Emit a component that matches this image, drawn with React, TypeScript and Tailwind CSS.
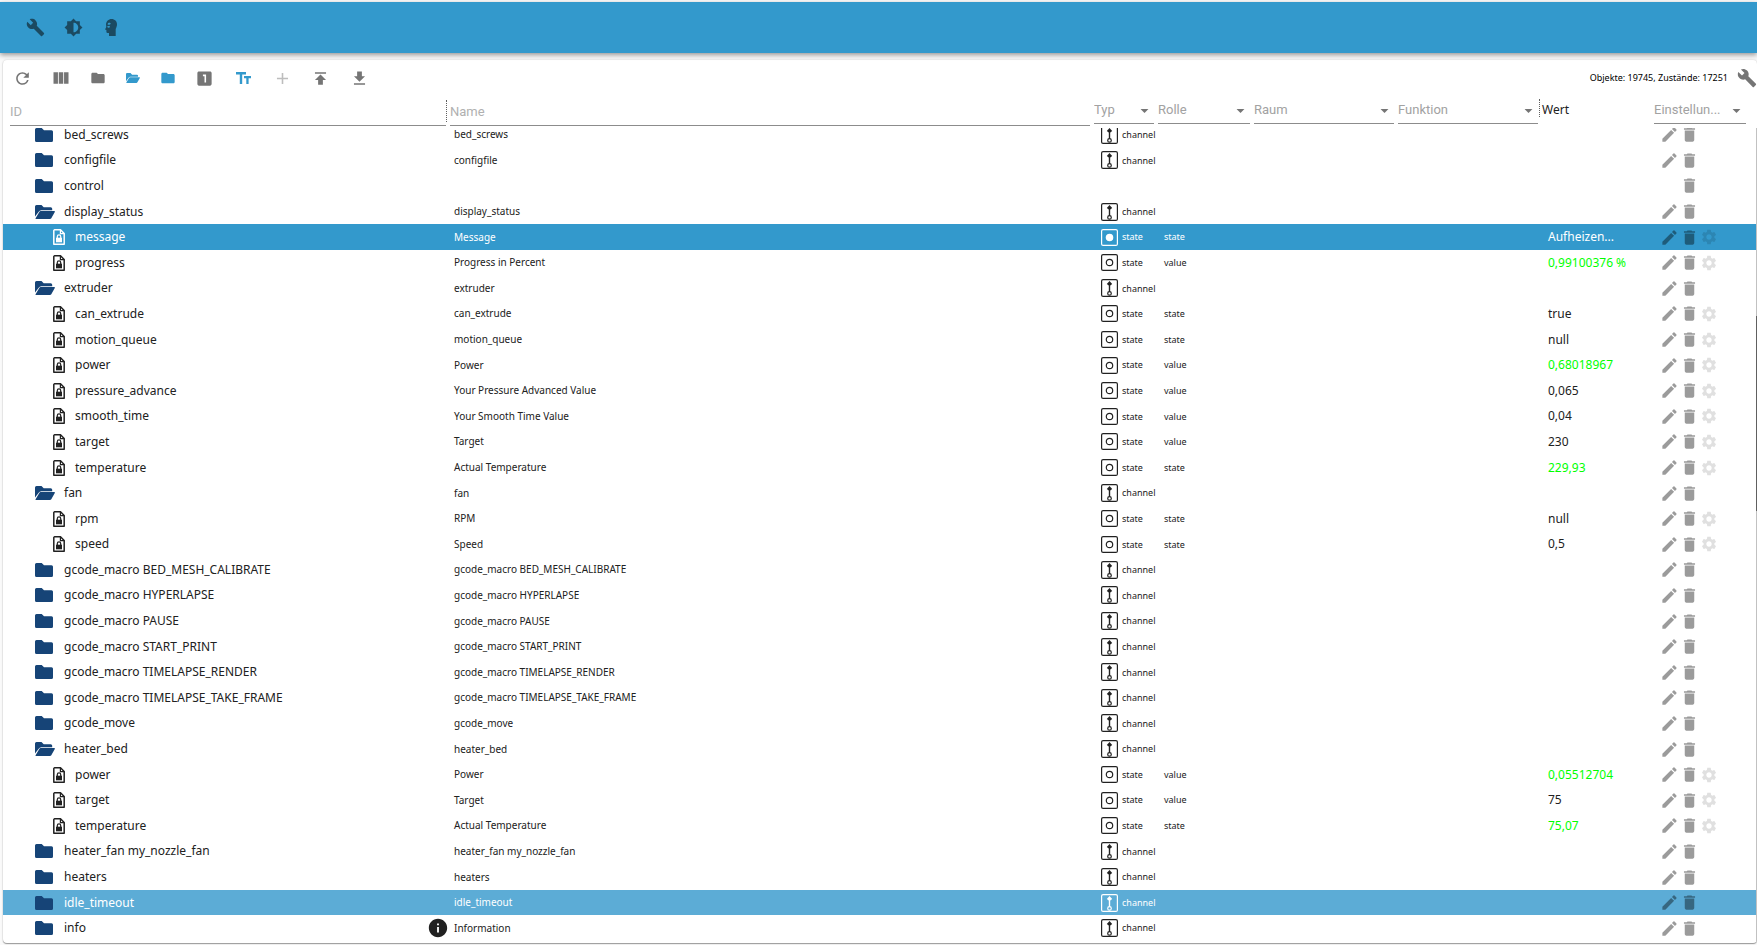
import type { ReactNode } from "react";
import { clsx } from "clsx";
import {
  MdAdd,
  MdArrowDropDown,
  MdBrightness6,
  MdBuild,
  MdCreate,
  MdDelete,
  MdFolder,
  MdGetApp,
  MdInfo,
  MdLooksOne,
  MdPublish,
  MdRefresh,
  MdSettings,
  MdViewColumn,
} from "react-icons/md";

type Kind = "channel" | "state" | "folder";

interface Item {
  id: string;
  name?: string;
  kind: Kind;
  open?: boolean;
  role?: string;
  value?: string;
  changed?: boolean;
  info?: boolean;
}

const channel = (id: string, extra: Partial<Item> = {}): Item => ({ id, name: id, kind: "channel", ...extra });
const state = (id: string, name: string, role: string, value: string, changed = false): Item => ({
  id,
  name,
  kind: "state",
  role,
  value,
  changed,
});

const ITEMS: Item[] = [
  channel("bed_screws"),
  channel("configfile"),
  { id: "control", kind: "folder" },
  channel("display_status", { open: true }),
  state("message", "Message", "state", "Aufheizen..."),
  state("progress", "Progress in Percent", "value", "0,99100376 %", true),
  channel("extruder", { open: true }),
  state("can_extrude", "can_extrude", "state", "true"),
  state("motion_queue", "motion_queue", "state", "null"),
  state("power", "Power", "value", "0,68018967", true),
  state("pressure_advance", "Your Pressure Advanced Value", "value", "0,065"),
  state("smooth_time", "Your Smooth Time Value", "value", "0,04"),
  state("target", "Target", "value", "230"),
  state("temperature", "Actual Temperature", "state", "229,93", true),
  channel("fan", { open: true }),
  state("rpm", "RPM", "state", "null"),
  state("speed", "Speed", "state", "0,5"),
  channel("gcode_macro BED_MESH_CALIBRATE"),
  channel("gcode_macro HYPERLAPSE"),
  channel("gcode_macro PAUSE"),
  channel("gcode_macro START_PRINT"),
  channel("gcode_macro TIMELAPSE_RENDER"),
  channel("gcode_macro TIMELAPSE_TAKE_FRAME"),
  channel("gcode_move"),
  channel("heater_bed", { open: true }),
  state("power", "Power", "value", "0,05512704", true),
  state("target", "Target", "value", "75"),
  state("temperature", "Actual Temperature", "state", "75,07", true),
  channel("heater_fan my_nozzle_fan"),
  channel("heaters"),
  channel("idle_timeout"),
  channel("info", { name: "Information", info: true }),
];

const SELECTED = "message";
const HOVERED = "idle_timeout";

const COLUMNS = "grid grid-cols-[447px_minmax(0,1fr)_64px_96px_144px_144px_112px_103px]";

export default function App() {
  return (
    <div className="flex h-screen flex-col overflow-hidden bg-[#fafafa] pt-[2px] font-['Noto_Sans',sans-serif] text-[#212121]">
      <AppBar />
      <main className="mt-[7px] mb-[2px] ml-[3px] flex min-h-0 flex-1 flex-col rounded-sm bg-white shadow-[0_1px_1px_#999,0_0_2px_#ccc]">
        <Toolbar />
        <ObjectTable />
      </main>
    </div>
  );
}

function AppBar() {
  return (
    <header className="z-10 flex h-[51px] shrink-0 items-center bg-[#3399cc] pl-4 text-[#1b4a61] shadow-[0_2px_5px_rgba(0,0,0,0.4)]">
      <IconButton label="Einstellungen" size="medium">
        <MdBuild size={19} />
      </IconButton>
      <IconButton label="Farbschema" size="medium">
        <MdBrightness6 size={19} />
      </IconButton>
      <IconButton label="Expertenmodus" size="medium">
        <ExpertIcon />
      </IconButton>
    </header>
  );
}

function Toolbar() {
  return (
    <div className="flex h-9 shrink-0 items-center text-[#757575]">
      <IconButton label="Aktualisieren">
        <MdRefresh size={19} />
      </IconButton>
      <IconButton label="Spalten" size="medium">
        <MdViewColumn size={20} />
      </IconButton>
      <IconButton label="Alle zuklappen" size="small">
        <MdFolder size={16} />
      </IconButton>
      <IconButton label="Alle aufklappen" size="small">
        <OpenFolderIcon className="h-[10px] w-[14px] text-[#3399cc]" />
      </IconButton>
      <IconButton label="Eine Ebene zuklappen" size="small">
        <MdFolder size={16} color="#3399cc" />
      </IconButton>
      <IconButton label="Eine Ebene aufklappen">
        <MdLooksOne size={19} />
      </IconButton>
      <IconButton label="Beschreibungen">
        <TextSizeIcon />
      </IconButton>
      <IconButton label="Neues Objekt" disabled size="medium">
        <MdAdd size={19} />
      </IconButton>
      <IconButton label="Hochladen">
        <MdPublish size={19} />
      </IconButton>
      <IconButton label="Herunterladen">
        <MdGetApp size={19} />
      </IconButton>
      <div className="ml-auto flex items-center">
        <span className="text-[9px] text-black">Objekte: 19745, Zustände: 17251</span>
        <button type="button" aria-label="Spalten anpassen" className="ml-[9px]">
          <MdBuild size={20} />
        </button>
      </div>
    </div>
  );
}

interface IconButtonProps {
  label: string;
  size?: "small" | "medium" | "large";
  disabled?: boolean;
  children: ReactNode;
}

const WIDTHS = { small: "w-[35px]", medium: "w-[38px]", large: "w-[39px]" };

function IconButton({ label, size = "large", disabled, children }: IconButtonProps) {
  return (
    <button
      type="button"
      aria-label={label}
      disabled={disabled}
      className={clsx("flex h-9 items-center justify-center disabled:text-[#bdbdbd]", WIDTHS[size])}
    >
      {children}
    </button>
  );
}

function ObjectTable() {
  return (
    <div className="relative flex min-h-0 flex-1 flex-col">
      <table className="flex min-h-0 flex-1 flex-col">
        <thead className="relative z-10 block shrink-0 bg-white">
          <tr className={clsx(COLUMNS, "h-8 text-left font-['Roboto',sans-serif] text-[13px]")}>
            <th className="flex pr-[3px] pl-[7px] font-normal">
              <TextFilter label="ID" />
              <Divider />
            </th>
            <th className="pr-1 font-normal">
              <TextFilter label="Name" />
            </th>
            <SelectFilter label="Typ" />
            <SelectFilter label="Rolle" />
            <SelectFilter label="Raum" />
            <SelectFilter label="Funktion" divider />
            <th className="font-['Noto_Sans',sans-serif] text-[12px] leading-[28px] font-normal">Wert</th>
            <SelectFilter label="Einstellun..." last />
          </tr>
        </thead>
        <tbody className="-mt-[6px] mb-[2px] grid min-h-0 flex-1 auto-rows-fr border-r border-[#c1c1c1]">
          {ITEMS.map((item, i) => (
            <Row key={i} item={item} />
          ))}
        </tbody>
      </table>
      <div className="absolute top-[26%] right-0 h-[23%] w-px bg-[#606060]" />
    </div>
  );
}

function Divider() {
  return <span className="mt-1 h-[22px] shrink-0 border-l border-dotted border-[#606060]" />;
}

function TextFilter({ label }: { label: string }) {
  return (
    <input
      aria-label={label}
      placeholder={label}
      className="h-[30px] w-full min-w-0 border-b border-[#8c8c8c] pt-[2px] outline-none placeholder:text-[#b0b0b0]"
    />
  );
}

function SelectFilter({ label, last, divider }: { label: string; last?: boolean; divider?: boolean }) {
  return (
    <th className={clsx("flex font-normal", last ? "pr-[11px]" : divider ? "pr-[2px]" : "pr-1")}>
      <div className="relative flex-1">
        <select
          aria-label={label}
          className="h-7 w-full appearance-none border-b border-[#8c8c8c] pt-px text-[#a2a2a2] outline-none"
        >
          <option>{label}</option>
        </select>
        <MdArrowDropDown size={19} className="pointer-events-none absolute top-[5px] right-0 text-[#757575]" />
      </div>
      {divider && <span className="mt-[3px] ml-px h-[18px] border-l border-dotted border-[#606060]" />}
    </th>
  );
}

function Row({ item }: { item: Item }) {
  const selected = item.id === SELECTED;
  const hovered = item.id === HOVERED;
  const isState = item.kind === "state";
  return (
    <tr
      className={clsx(
        COLUMNS,
        "min-h-0 items-center text-[10px]",
        selected && "bg-[#3399cc] text-white",
        hovered && "bg-[#5cacd6] text-white",
      )}
    >
      <td className="flex items-center text-[12px]">
        {isState ? (
          <span className="flex w-[72px] pl-[50px]">
            <StateFileIcon />
          </span>
        ) : (
          <span className="flex w-[61px] pl-8 text-[#164477]">
            {item.open ? <OpenFolderIcon className="h-[14px] w-5" /> : <ClosedFolderIcon />}
          </span>
        )}
        {item.id}
        {item.info && <MdInfo size={22} className="mr-px ml-auto" />}
      </td>
      <td className="pl-1">{item.name}</td>
      <td className="flex items-center gap-1 pl-2 text-[9px]">
        {item.kind !== "folder" && (
          <>
            {isState ? <StateIcon filled={selected} /> : <ChannelIcon />}
            {item.kind}
          </>
        )}
      </td>
      <td className="pl-[7px] text-[9px]">{item.role}</td>
      <td />
      <td />
      <td className={clsx("pl-[7px] text-[12px]", item.changed && "text-[#00ff00]")}>{item.value}</td>
      <td
        className={clsx(
          "grid grid-cols-[20px_20px_19px] items-center pl-[7px]",
          selected || hovered ? "text-black/40" : "text-[#9b9b9b]",
        )}
      >
        {item.kind === "folder" ? (
          <span />
        ) : (
          <button type="button" aria-label={`${item.id} bearbeiten`}>
            <MdCreate size={19} />
          </button>
        )}
        <button type="button" aria-label={`${item.id} löschen`}>
          <MdDelete size={19} />
        </button>
        {isState && (
          <button type="button" aria-label={`${item.id} konfigurieren`} className="opacity-30">
            <MdSettings size={18} />
          </button>
        )}
      </td>
    </tr>
  );
}

function ClosedFolderIcon() {
  return (
    <svg viewBox="0 0 18 14" className="h-[14px] w-[18px]" fill="currentColor">
      <path d="M1.5 0h5.2L9 2.2h7.5A1.5 1.5 0 0 1 18 3.7v8.8a1.5 1.5 0 0 1-1.5 1.5h-15A1.5 1.5 0 0 1 0 12.5v-11A1.5 1.5 0 0 1 1.5 0z" />
    </svg>
  );
}

function OpenFolderIcon({ className }: { className: string }) {
  return (
    <svg viewBox="0 0 20 14" className={className} fill="currentColor">
      <path d="M0 11.5V1.5A1.5 1.5 0 0 1 1.5 0h5l2.2 2.2h7A1.5 1.5 0 0 1 17.2 3.7v1.500H6.300a3 3 0 0 0-2.600 1.500z" />
      <path d="M.6 13.200l3.700-6.300a1.600 1.600 0 0 1 1.400-.8h13.600a.6.6 0 0 1 .5.900l-3.500 6.200a1.600 1.600 0 0 1-1.400.8H1a.5.5 0 0 1-.4-.8z" />
    </svg>
  );
}

function StateFileIcon() {
  return (
    <svg viewBox="0 0 12 16" className="h-4 w-3" fill="none" stroke="currentColor">
      <path d="M1.500.8h6l3.700 3.700v10.700H.8V1.500z" strokeWidth="1.500" strokeLinejoin="round" />
      <path d="M7.400.8v3.800h3.800" strokeWidth="1.200" />
      <path d="M4.300 9V7.600a1.700 1.700 0 0 1 3.400 0V9" strokeWidth="1.200" />
      <path d="M3 8.700h6v4.600H3z" fill="currentColor" stroke="none" />
    </svg>
  );
}

function StateIcon({ filled }: { filled: boolean }) {
  return (
    <svg viewBox="0 0 17 17" className="size-[17px] shrink-0" fill="none" stroke="currentColor">
      <rect x=".6" y=".6" width="15.800" height="15.800" rx="1.500" strokeWidth="1.200" />
      <circle cx="8.500" cy="8.500" r="3.200" strokeWidth="1.200" fill={filled ? "currentColor" : "none"} />
    </svg>
  );
}

function ChannelIcon() {
  return (
    <svg viewBox="0 0 17 18" className="h-[18px] w-[17px] shrink-0" fill="none" stroke="currentColor">
      <rect x=".6" y=".6" width="15.800" height="16.800" rx="1.500" strokeWidth="1.200" />
      <circle cx="8.500" cy="14.400" r="1.800" strokeWidth="1.200" />
      <path d="M8.500 12.600V5" strokeWidth="1.400" />
      <path d="M8.500 2l2.700 2.900-2.700 2.100-2.700-2.100z" fill="currentColor" stroke="none" />
    </svg>
  );
}

function TextSizeIcon() {
  return (
    <svg viewBox="0 0 15 12" className="h-3 w-[15px] text-[#3399cc]" fill="currentColor">
      <path d="M0 0h10v2.400H6.200V12H3.800V2.400H0zM8 4h7v2.200h-2.400V12h-2.300V6.200H8z" />
    </svg>
  );
}

function ExpertIcon() {
  return (
    <svg viewBox="0 0 12 17" className="h-[17px] w-3" fill="currentColor">
      <path
        fillRule="evenodd"
        d="M6.500 0C9.800 0 12 2.300 12 5.300c0 2-.7 3.300-1.300 4.800V17H4v-3H2.500C1.600 14 1.400 13.500 1.400 12.800V11L0 10.400 1.300 8 1 5.300C1.300 2.300 3.500 0 6.500 0zM4.200 3.600a1.800 1.800 0 0 0-1.500 2.200h1.800L6 4.700zM2 7.400a2 2 0 0 0 3.100.6l-.8-1.200z"
      />
    </svg>
  );
}
